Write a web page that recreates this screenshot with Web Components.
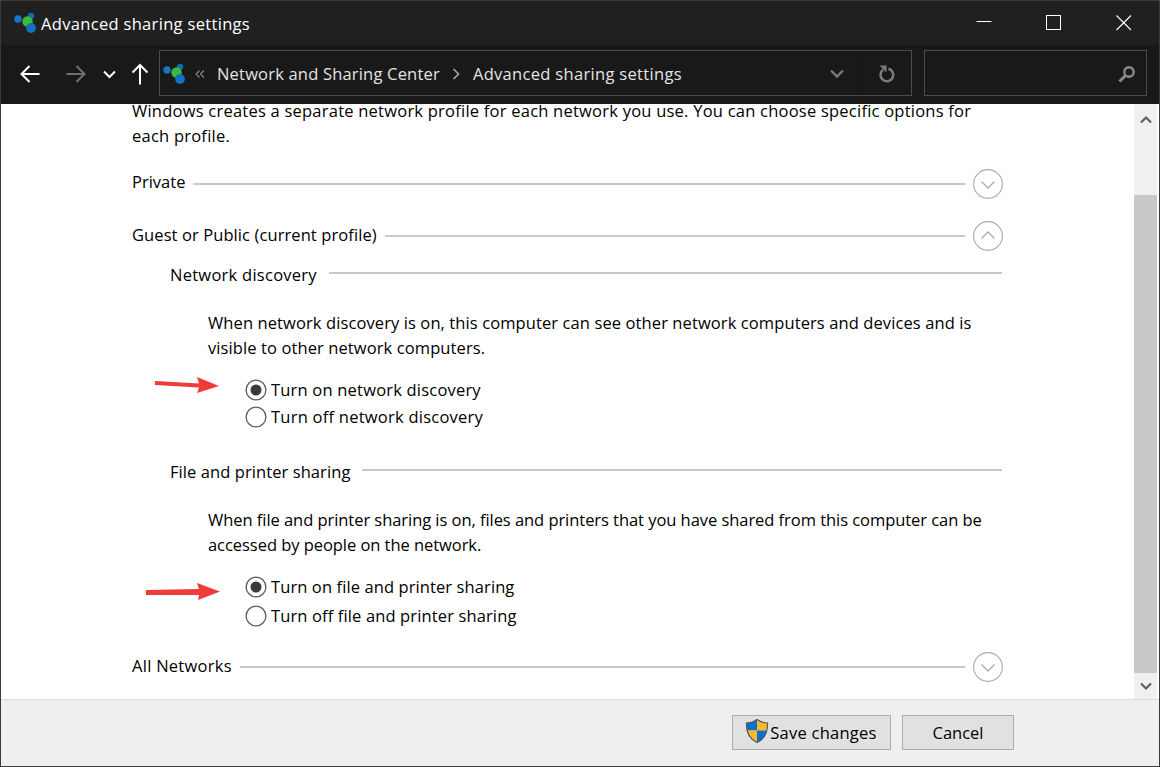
<!DOCTYPE html>
<html>
<head>
<meta charset="utf-8">
<title>Advanced sharing settings</title>
<style>
    html, body { margin: 0; padding: 0; background: #fff; }
    body { font-family: "Open Sans", "Noto Sans", sans-serif; }
</style>
</head>
<body>
<win-window>
    <win-titlebar slot="top" caption="Advanced sharing settings"></win-titlebar>
    <win-navbar slot="top"></win-navbar>

    <win-panel>
        <p-text style="margin: -6px 0 0 131px; width: 860px; letter-spacing: .23px">Windows creates a separate network profile for each network you use. You can choose specific options for each profile.</p-text>

        <section-head label="Private" state="closed" style="margin-top: 21px"></section-head>
        <section-head label="Guest or Public (current profile)" state="open" style="margin-top: 22px; letter-spacing: .09px; --lbl-top: -2px"></section-head>

        <sub-head label="Network discovery" style="margin-top: 10px; letter-spacing: .26px"></sub-head>
        <p-text style="margin: 25px 0 0 207px; width: 790px; letter-spacing: .1px">When network discovery is on, this computer can see other network computers and devices and is visible to other network computers.</p-text>
        <radio-group arrow="a" style="margin-top: 17px">
            <radio-option checked style="letter-spacing: .2px">Turn on network discovery</radio-option>
            <radio-option style="margin-top: 1px; letter-spacing: .24px">Turn off network discovery</radio-option>
        </radio-group>

        <sub-head label="File and printer sharing" style="margin-top: 28px; letter-spacing: .08px"></sub-head>
        <p-text style="margin: 25px 0 0 207px; width: 790px; letter-spacing: -.05px">When file and printer sharing is on, files and printers that you have shared from this computer can be accessed by people on the network.</p-text>
        <radio-group arrow="b" style="margin-top: 17px">
            <radio-option checked style="letter-spacing: .1px">Turn on file and printer sharing</radio-option>
            <radio-option style="margin-top: 3px; letter-spacing: .13px">Turn off file and printer sharing</radio-option>
        </radio-group>

        <section-head label="All Networks" state="closed" style="margin-top: 23px; letter-spacing: .27px; --lbl-top: -2px"></section-head>
    </win-panel>

    <win-footer slot="bottom">
        <win-button shield style="width: 159px; letter-spacing: .25px">Save changes</win-button>
        <win-button style="width: 112px">Cancel</win-button>
    </win-footer>
</win-window>

<script>
// little helper, every component is just a template + a shadow root
function tpl(html) {
    const t = document.createElement('template')
    t.innerHTML = html
    return t
}

const netIcon = `
    <svg width="24" height="24" viewBox="0 0 24 24">
        <circle cx="18" cy="5" r="3.2" fill="#0f6cb0"/>
        <circle cx="5" cy="8" r="3.7" fill="#1b74c4"/>
        <circle cx="14.5" cy="10.5" r="5.2" fill="#3cba3a"/>
        <circle cx="18" cy="17" r="4.9" fill="#1470c0"/>
    </svg>`

class WinWindow extends HTMLElement {
    constructor() {
        super()
        this.attachShadow({ mode: 'open' }).appendChild(tpl(`
            <style>
                :host {
                    display: flex;
                    flex-direction: column;
                    box-sizing: border-box;
                    width: 1160px;
                    height: 767px;
                    overflow: hidden;
                    border: 1px solid #3b3b3b;
                    background: #fff;
                }
            </style>
            <slot name="top"></slot>
            <slot></slot>
            <slot name="bottom"></slot>
        `).content.cloneNode(true))
    }
}

class WinTitlebar extends HTMLElement {
    constructor() {
        super()
        this.attachShadow({ mode: 'open' }).appendChild(tpl(`
            <style>
                :host {
                    display: flex;
                    align-items: center;
                    height: 44px;
                    flex: none;
                    background: #202020;
                    color: #fff;
                    font-size: 16.5px;
                }
                .icon { margin: 0 4px 0 12px; display: flex; }
                .cap { flex: 1; padding-top: 1px; letter-spacing: .32px; }
                .ctl { display: flex; width: 70px; height: 44px; align-items: center; justify-content: center; }
                .ctl svg { display: block; }
            </style>
            <span class="icon">${netIcon}</span>
            <span class="cap"></span>
            <span class="ctl"><svg width="16" height="16" viewBox="0 0 16 16"><path d="M0.5 6.5H15.5" stroke="#fff"/></svg></span>
            <span class="ctl"><svg width="16" height="16" viewBox="0 0 16 16"><rect x="0.5" y="0.5" width="14" height="14" fill="none" stroke="#fff"/></svg></span>
            <span class="ctl"><svg width="16" height="16" viewBox="0 0 16 16"><path d="M0.5 0.5L15 15M15 0.5L0.5 15" stroke="#fff" stroke-width="1.1"/></svg></span>
        `).content.cloneNode(true))
        this.shadowRoot.querySelector('.cap').textContent = this.getAttribute('caption')
    }
}

class WinNavbar extends HTMLElement {
    constructor() {
        super()
        this.attachShadow({ mode: 'open' }).appendChild(tpl(`
            <style>
                :host {
                    display: flex;
                    align-items: center;
                    height: 59px;
                    flex: none;
                    box-sizing: border-box;
                    padding: 5px 12px 8px 0;
                    background: #191919;
                    color: #e4e4e4;
                    font-size: 16.5px;
                }
                .navs { display: flex; align-items: center; box-sizing: border-box; padding-top: 2px; width: 158px; height: 46px; flex: none; }
                .navs svg { display: block; }
                .box {
                    display: flex;
                    align-items: center;
                    box-sizing: border-box;
                    height: 46px;
                    border: 1px solid #4b4b4b;
                }
                .addr { width: 753px; flex: none; margin-right: 12px; }
                .search { flex: 1; justify-content: flex-end; padding: 2px 10px 0 0; }
                .addr .icon { display: flex; margin: 2px 0 0 2px; }
                .crumb { white-space: nowrap; padding-top: 1px; }
                .drop { width: 49px; height: 44px; flex: none; display: flex; align-items: center; justify-content: center; border-right: 1px solid #141414; box-sizing: border-box; margin-left: auto; padding-top: 2px; }
                .refresh { width: 49px; height: 44px; flex: none; display: flex; align-items: center; justify-content: center; padding-top: 1px; box-sizing: border-box; }
            </style>
            <div class="navs">
                <svg style="margin-left: 19px" width="20" height="18" viewBox="0 0 20 18"><path d="M19.5 9H1.5M9.5 1L1.5 9L9.5 17" fill="none" stroke="#fff" stroke-width="2"/></svg>
                <svg style="margin-left: 26px" width="20" height="18" viewBox="0 0 20 18"><path d="M0.5 9H18.5M10.5 1L18.5 9L10.5 17" fill="none" stroke="#707070" stroke-width="2"/></svg>
                <svg style="margin-left: 17px" width="13" height="9" viewBox="0 0 13 9"><path d="M1 1.5L6.5 7L12 1.5" fill="none" stroke="#fff" stroke-width="2"/></svg>
                <svg style="margin-left: 15px" width="18" height="22" viewBox="0 0 18 22"><path d="M9 21.5V2M1.5 9.5L9 2L16.5 9.5" fill="none" stroke="#fff" stroke-width="2"/></svg>
            </div>
            <div class="box addr">
                <span class="icon">${netIcon}</span>
                <svg style="margin: 2px 0 0 9px" width="10" height="8" viewBox="0 0 10 8"><path d="M4.5 0.5L1 4L4.5 7.5M9 0.5L5.5 4L9 7.5" fill="none" stroke="#8a8a8a" stroke-width="1.1"/></svg>
                <span class="crumb" style="margin-left: 12px; letter-spacing: .19px">Network and Sharing Center</span>
                <svg style="margin: 2px 12px 0" width="9" height="12" viewBox="0 0 9 12"><path d="M1.5 1L6.5 6L1.5 11" fill="none" stroke="#a8a8a8" stroke-width="1.6"/></svg>
                <span class="crumb" style="letter-spacing: .32px">Advanced sharing settings</span>
                <span class="drop"><svg width="14" height="10" viewBox="0 0 14 10"><path d="M1 1.5L7 7.5L13 1.5" fill="none" stroke="#7a7a7a" stroke-width="2.4"/></svg></span>
                <span class="refresh"><svg width="20" height="20" viewBox="0 0 20 20"><path d="M6 5.8A6.4 6.4 0 1 0 11.5 4.7" fill="none" stroke="#7c7c7c" stroke-width="2.6"/><path d="M2.5 1.5H9.5V8.5Z" fill="#7c7c7c"/></svg></span>
            </div>
            <div class="box search">
                <svg width="18" height="18" viewBox="0 0 18 18"><circle cx="11" cy="7" r="4.7" fill="none" stroke="#8a8a8a" stroke-width="2.4"/><path d="M7.5 10.5L1.5 16.5" stroke="#8a8a8a" stroke-width="3"/></svg>
            </div>
        `).content.cloneNode(true))
    }
}

class WinPanel extends HTMLElement {
    constructor() {
        super()
        this.attachShadow({ mode: 'open' }).appendChild(tpl(`
            <style>
                :host {
                    display: flex;
                    flex: 1;
                    min-height: 0;
                    overflow: hidden;
                    background: #fff;
                    color: #000;
                    font-size: 16.5px;
                }
                .body { flex: 1; min-width: 0; }
                .scroll {
                    display: flex;
                    flex-direction: column;
                    width: 23px;
                    flex: none;
                    margin-right: 2px;
                    background: #f0f0f0;
                }
                .btn { height: 30px; flex: none; display: flex; align-items: center; justify-content: center; }
                .gap { height: 61px; flex: none; }
                .thumb { flex: 1; background: #c9c9c9; }
            </style>
            <div class="body"><slot></slot></div>
            <div class="scroll">
                <div class="btn"><svg width="12" height="9" viewBox="0 0 12 9"><path d="M1 7.5L6 2.5L11 7.5" fill="none" stroke="#606060" stroke-width="2.2"/></svg></div>
                <div class="gap"></div>
                <div class="thumb"></div>
                <div class="btn" style="height: 26px"><svg width="12" height="9" viewBox="0 0 12 9"><path d="M1 1.5L6 6.5L11 1.5" fill="none" stroke="#606060" stroke-width="2.2"/></svg></div>
            </div>
        `).content.cloneNode(true))
    }
}

class PText extends HTMLElement {
    constructor() {
        super()
        this.attachShadow({ mode: 'open' }).innerHTML = `
            <style>:host { display: block; line-height: 25px; }</style>
            <slot></slot>`
    }
}

class SectionHead extends HTMLElement {
    constructor() {
        super()
        const open = this.getAttribute('state') === 'open'
        const chevron = open ? 'M8.5 17.5L15 11L21.5 17.5' : 'M8.5 12.5L15 19L21.5 12.5'
        this.attachShadow({ mode: 'open' }).innerHTML = `
            <style>
                :host { display: flex; align-items: center; height: 30px; margin-left: 131px; width: 871px; }
                .line { flex: 1; height: 2px; background: #c9c9c9; margin: 0 8px; }
                .lbl { white-space: nowrap; position: relative; top: var(--lbl-top, -3px); }
                svg { display: block; flex: none; }
            </style>
            <span class="lbl"></span>
            <span class="line"></span>
            <svg width="30" height="30" viewBox="0 0 30 30">
                <circle cx="15" cy="15" r="14.4" fill="#fff" stroke="#ababab" stroke-width="1.1"/>
                <path d="${chevron}" fill="none" stroke="#ababab" stroke-width="1.3"/>
            </svg>`
        this.shadowRoot.querySelector('.lbl').textContent = this.getAttribute('label')
    }
}

class SubHead extends HTMLElement {
    constructor() {
        super()
        this.attachShadow({ mode: 'open' }).innerHTML = `
            <style>
                :host { display: flex; align-items: center; height: 24px; margin-left: 169px; width: 832px; }
                .line { flex: 1; height: 2px; background: #c9c9c9; margin-left: 12px; }
                .lbl { white-space: nowrap; position: relative; top: 1px; }
            </style>
            <span class="lbl"></span>
            <span class="line"></span>`
        this.shadowRoot.querySelector('.lbl').textContent = this.getAttribute('label')
    }
}

class RadioGroup extends HTMLElement {
    constructor() {
        super()
        // the red arrows are drawn over the page, they are not part of the form
        const kind = this.getAttribute('arrow')
        const arrow = kind === 'a'
            ? `<svg class="a" style="left: 152px; top: -7px" width="70" height="28" viewBox="0 0 70 28"><path d="M2 11L46 13.5L44 7L66 16L44 23L46 17.5L2 15Z" fill="#ee3b3b"/></svg>`
            : `<svg class="a" style="left: 143px; top: -7px" width="78" height="36" viewBox="0 0 78 36"><path d="M2 23L55 22L53 16L76 24.5L54 33L55 28L2 28Z" fill="#ee3b3b"/></svg>`
        this.attachShadow({ mode: 'open' }).innerHTML = `
            <style>
                :host { display: block; position: relative; margin-left: 244px; }
                .a { position: absolute; margin-left: -244px; display: block; }
            </style>
            <slot></slot>
            ${arrow}`
    }
}

class RadioOption extends HTMLElement {
    constructor() {
        super()
        const dot = this.hasAttribute('checked') ? `<circle cx="11" cy="11" r="5.5" fill="#3a3a3a"/>` : ''
        this.attachShadow({ mode: 'open' }).innerHTML = `
            <style>
                :host { display: flex; align-items: center; height: 26px; }
                svg { display: block; flex: none; margin: 0 4px 0 0; }
                span { white-space: nowrap; position: relative; top: -1px; }
            </style>
            <svg width="22" height="22" viewBox="0 0 22 22">
                <circle cx="11" cy="11" r="9.9" fill="#fff" stroke="#5c5c5c" stroke-width="1.3"/>${dot}
            </svg>
            <span><slot></slot></span>`
    }
}

class WinFooter extends HTMLElement {
    constructor() {
        super()
        this.attachShadow({ mode: 'open' }).innerHTML = `
            <style>
                :host {
                    display: flex;
                    flex: none;
                    justify-content: flex-end;
                    gap: 11px;
                    box-sizing: border-box;
                    height: 67px;
                    padding: 15px 145px 0 0;
                    border-top: 1px solid #dcdcdc;
                    background: #efefef;
                }
            </style>
            <slot></slot>`
    }
}

class WinButton extends HTMLElement {
    constructor() {
        super()
        const shield = this.hasAttribute('shield') ? `
            <svg width="24" height="26" viewBox="0 0 24 26">
                <clipPath id="sh"><path d="M12 1.5C9 3.8 5.5 4.8 1.5 5C1.2 13.5 4 21 12 24.5C20 21 22.8 13.5 22.5 5C18.5 4.8 15 3.8 12 1.5Z"/></clipPath>
                <g clip-path="url(#sh)">
                    <rect x="0" y="0" width="12" height="12.5" fill="#0f6fce"/>
                    <rect x="12" y="0" width="12" height="12.5" fill="#fdb92e"/>
                    <rect x="0" y="12.5" width="12" height="13" fill="#fdb92e"/>
                    <rect x="12" y="12.5" width="12" height="13" fill="#0f6fce"/>
                </g>
                <path d="M12 1.5C9 3.8 5.5 4.8 1.5 5C1.2 13.5 4 21 12 24.5C20 21 22.8 13.5 22.5 5C18.5 4.8 15 3.8 12 1.5Z" fill="none" stroke="#565656" stroke-width="1.2"/>
            </svg>` : ''
        this.attachShadow({ mode: 'open' }).innerHTML = `
            <style>
                :host {
                    display: flex;
                    align-items: center;
                    justify-content: center;
                    box-sizing: border-box;
                    height: 35px;
                    background: #e1e1e1;
                    border: 1px solid #adadad;
                    color: #000;
                    font-size: 16.5px;
                }
                svg { display: block; flex: none; margin: -3px 1px 0 -1px; }
                span { white-space: nowrap; }
            </style>
            ${shield}<span><slot></slot></span>`
    }
}

customElements.define('win-window', WinWindow)
customElements.define('win-titlebar', WinTitlebar)
customElements.define('win-navbar', WinNavbar)
customElements.define('win-panel', WinPanel)
customElements.define('p-text', PText)
customElements.define('section-head', SectionHead)
customElements.define('sub-head', SubHead)
customElements.define('radio-group', RadioGroup)
customElements.define('radio-option', RadioOption)
customElements.define('win-footer', WinFooter)
customElements.define('win-button', WinButton)
</script>
</body>
</html>
